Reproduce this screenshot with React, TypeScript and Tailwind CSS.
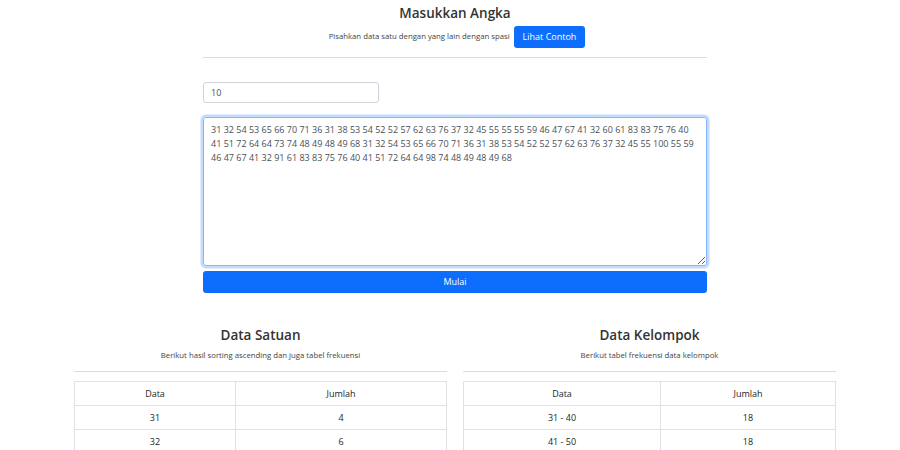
import React from "react";

const font = { fontFamily: '"Open Sans", "Noto Sans", Arial, sans-serif' };

const numbers =
  "31 32 54 53 65 66 70 71 36 31 38 53 54 52 52 57 62 63 76 37 32 45 55 55 55 59 46 47 67 41 32 60 61 83 83 75 76 40\n" +
  "41 51 72 64 64 73 74 48 49 48 49 68 31 32 54 53 65 66 70 71 36 31 38 53 54 52 52 57 62 63 76 37 32 45 55 100 55 59\n" +
  "46 47 67 41 32 91 61 83 83 75 76 40 41 51 72 64 64 98 74 48 49 48 49 68";

function Table({ rows, c1 }: { rows: [string, string][]; c1: string }) {
  return (
    <table className="w-full border-collapse text-[9px] text-[#212529]">
      <tbody>
        <tr className="h-[24px]">
          <td className={`${c1} border border-[#dee2e6] text-center align-middle`}>Data</td>
          <td className="border border-[#dee2e6] text-center align-middle">Jumlah</td>
        </tr>
        {rows.map(([a, b], i) => (
          <tr key={i} className="h-[24px]">
            <td className="border border-[#dee2e6] text-center align-middle">{a}</td>
            <td className="border border-[#dee2e6] text-center align-middle">{b}</td>
          </tr>
        ))}
      </tbody>
    </table>
  );
}

function Section({ title, sub, rows, c1 }: { title: string; sub: string; rows: [string, string][]; c1: string }) {
  return (
    <div className="w-[373px] flex flex-col">
      <h2 className="text-center text-[13.5px] font-semibold leading-[18px] text-[#333]">{title}</h2>
      <p className="mt-[5px] text-center text-[7.75px] leading-[12px] text-[#444]">{sub}</p>
      <div className="mt-[10px] h-px bg-[#dcdcdc]" />
      <div className="mt-[9px]">
        <Table rows={rows} c1={c1} />
      </div>
    </div>
  );
}

export default function App() {
  return (
    <div className="w-[900px] h-[450px] overflow-hidden bg-white" style={font}>
      <div className="ml-[74px] w-[762px]">
        <div className="mx-auto w-[504px] flex flex-col pt-[4px]">
          <h1 className="text-center text-[13.5px] font-semibold leading-[18px] text-[#333]">Masukkan Angka</h1>
          <div className="mt-[4px] flex items-center justify-center gap-[4px] pl-[4px]">
            <span className="text-[7.75px] text-[#444]">Pisahkan data satu dengan yang lain dengan spasi</span>
            <button className="h-[22px] rounded-[3px] bg-[#0d6efd] px-[9px] text-[9px] text-white">Lihat Contoh</button>
          </div>
          <div className="mt-[9px] h-px bg-[#dcdcdc]" />
          <input
            readOnly
            value="10"
            className="mt-[24px] h-[21px] w-[176px] rounded-[3px] border border-[#ced4da] px-[7px] text-[9px] text-[#495057] outline-none"
          />
          <textarea
            readOnly
            value={numbers}
            className="mt-[14px] h-[149px] w-full rounded-[3px] border border-[#86b7fe] px-[7px] py-[5px] text-[9px] leading-[14px] text-[#495057] outline-none shadow-[0_0_0_2.5px_rgba(13,110,253,0.25)]"
          />
          <button className="mt-[5px] h-[22px] w-full rounded-[3px] bg-[#0d6efd] text-[9px] text-white">Mulai</button>
        </div>
        <div className="mt-[33px] flex justify-between">
          <Section
            title="Data Satuan"
            sub="Berikut hasil sorting ascending dan juga tabel frekuensi"
            rows={[["31", "4"], ["32", "6"], ["36", "2"]]}
            c1="w-[161px]"
          />
          <Section
            title="Data Kelompok"
            sub="Berikut tabel frekuensi data kelompok"
            rows={[["31 - 40", "18"], ["41 - 50", "18"], ["51 - 60", "18"]]}
            c1="w-[197px]"
          />
        </div>
      </div>
    </div>
  );
}
